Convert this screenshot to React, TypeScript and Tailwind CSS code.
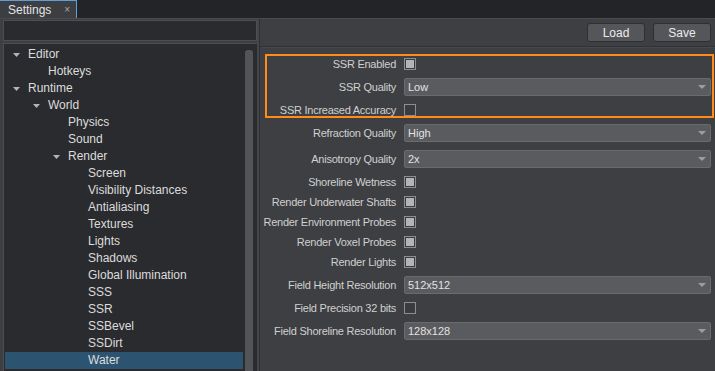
import React from "react";

type TreeItem = { label: string; level: number; open?: boolean; selected?: boolean };

const tree: TreeItem[] = [
  { label: "Editor", level: 0, open: true },
  { label: "Hotkeys", level: 1 },
  { label: "Runtime", level: 0, open: true },
  { label: "World", level: 1, open: true },
  { label: "Physics", level: 2 },
  { label: "Sound", level: 2 },
  { label: "Render", level: 2, open: true },
  { label: "Screen", level: 3 },
  { label: "Visibility Distances", level: 3 },
  { label: "Antialiasing", level: 3 },
  { label: "Textures", level: 3 },
  { label: "Lights", level: 3 },
  { label: "Shadows", level: 3 },
  { label: "Global Illumination", level: 3 },
  { label: "SSS", level: 3 },
  { label: "SSR", level: 3 },
  { label: "SSBevel", level: 3 },
  { label: "SSDirt", level: 3 },
  { label: "Water", level: 3, selected: true },
];

type Field =
  | { label: string; kind: "check"; checked: boolean }
  | { label: string; kind: "combo"; value: string };

const highlighted: Field[] = [
  { label: "SSR Enabled", kind: "check", checked: true },
  { label: "SSR Quality", kind: "combo", value: "Low" },
  { label: "SSR Increased Accuracy", kind: "check", checked: false },
];

const fields: Field[] = [
  { label: "Refraction Quality", kind: "combo", value: "High" },
  { label: "Anisotropy Quality", kind: "combo", value: "2x" },
  { label: "Shoreline Wetness", kind: "check", checked: true },
  { label: "Render Underwater Shafts", kind: "check", checked: true },
  { label: "Render Environment Probes", kind: "check", checked: true },
  { label: "Render Voxel Probes", kind: "check", checked: true },
  { label: "Render Lights", kind: "check", checked: true },
  { label: "Field Height Resolution", kind: "combo", value: "512x512" },
  { label: "Field Precision 32 bits", kind: "check", checked: false },
  { label: "Field Shoreline Resolution", kind: "combo", value: "128x128" },
];

const indent = ["pl-[23px]", "pl-[43px]", "pl-[63px]", "pl-[83px]"];

function Arrow() {
  return (
    <svg width="7" height="4" viewBox="0 0 7 4" className="absolute -ml-[15px]">
      <path d="M0 0h7L3.5 4z" fill="#b4b4b4" />
    </svg>
  );
}

function CheckBox({ checked }: { checked: boolean }) {
  return (
    <div className="flex h-[12px] w-[12px] items-center justify-center border border-[#8d8e91] bg-[#3a3b3e]">
      {checked ? <div className="h-[8px] w-[8px] bg-[#b3b4b6]" /> : null}
    </div>
  );
}

function Combo({ value }: { value: string }) {
  return (
    <div className="flex h-[18px] flex-1 items-center justify-between rounded-[2px] border border-[#6a6b6f] bg-[#5a5b5f] pl-[3px] pr-[4px] text-[#e2e2e2]">
      <span>{value}</span>
      <svg width="8" height="4" viewBox="0 0 8 4">
        <path d="M0 0h8L4 4z" fill="#9c9da0" />
      </svg>
    </div>
  );
}

function Row({ field, labelWidth }: { field: Field; labelWidth: string }) {
  return (
    <div className={`flex items-center gap-[8px] ${field.kind === "check" ? "h-[12px]" : "h-[18px]"}`}>
      <div className={`flex shrink-0 justify-end whitespace-nowrap tracking-[-0.25px] text-[#d0d0d0] ${labelWidth}`}>
        {field.label}
      </div>
      {field.kind === "check" ? <CheckBox checked={field.checked} /> : <Combo value={field.value} />}
    </div>
  );
}

export default function App() {
  return (
    <div
      className="flex h-[371px] w-[715px] flex-col overflow-hidden bg-[#232427] text-[11px] leading-[14px]"
      style={{ fontFamily: '"Liberation Sans", Arial, sans-serif' }}
    >
      <div className="flex h-[18px] shrink-0">
        <div className="flex w-[77px] items-center justify-between border-r border-t border-[#5f9fd6] bg-[#3d3e42] pl-[8px] pr-[6px] text-[12px] text-[#e4e4e4]">
          <span>Settings</span>
          <span className="text-[10px] text-[#a8a8a8]">×</span>
        </div>
      </div>
      <div className="flex min-h-0 flex-1 border-t border-[#4a4b4f] bg-[#3e3f43]">
        <div className="flex w-[257px] shrink-0 flex-col gap-[2px] pl-[3px] pt-[1px]">
          <div className="h-[21px] shrink-0 border border-[#4d4e52] bg-[#2a2b2e]" />
          <div className="flex min-h-0 flex-1 border-l border-t border-[#4d4e52] bg-[#2a2b2e] pt-[2px]">
            <div className="flex-1 pl-[1px] text-[12px] leading-[17px] text-[#dcdcdc]">
              {tree.map((t) => (
                <div
                  key={t.label}
                  className={`relative flex h-[17px] items-center ${indent[t.level]} ${t.selected ? "bg-[#2c5470]" : ""}`}
                >
                  {t.open ? <Arrow /> : null}
                  <span>{t.label}</span>
                </div>
              ))}
            </div>
            <div className="ml-[2px] mr-[4px] mt-[4px] w-[8px] rounded-t-[3px] bg-[#535457]" />
          </div>
        </div>
        <div className="w-[3px] shrink-0 border-r border-[#2f3033] bg-[#45464a]" />
        <div className="flex min-w-0 flex-1 flex-col">
          <div className="flex h-[28px] shrink-0 items-center justify-end gap-[8px] border-b border-[#303134] pr-[4px]">
            {["Load", "Save"].map((b) => (
              <div
                key={b}
                className="flex h-[19px] w-[58px] items-center justify-center rounded-[3px] border border-[#2e2f32] bg-[#55565a] text-[12px] text-[#ececec]"
              >
                {b}
              </div>
            ))}
          </div>
          <div className="ml-[2px] h-px bg-[#48494d]" />
          <div className="flex flex-col pl-[5px] pr-[1px] pt-[6px]">
            <div className="flex flex-col gap-[8px] border-2 border-[#ff8c16] pr-[1px] pt-[2px]">
              {highlighted.map((f) => (
                <Row key={f.label} field={f} labelWidth="w-[129px]" />
              ))}
            </div>
            <div className="mt-[6px] flex flex-col gap-[8px] pr-[3px]">
              {fields.map((f) => (
                <Row key={f.label} field={f} labelWidth="w-[131px]" />
              ))}
            </div>
          </div>
        </div>
      </div>
    </div>
  );
}
